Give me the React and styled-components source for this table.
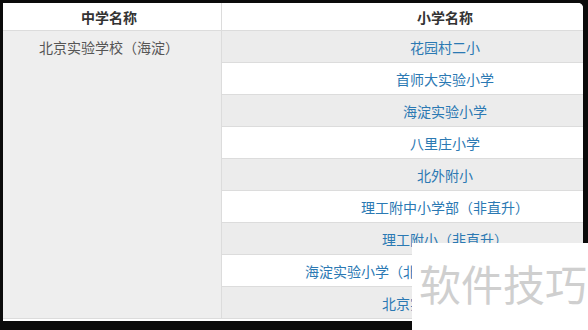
import React from "react";
import styled, { createGlobalStyle } from "styled-components";

const GlobalStyle = createGlobalStyle`
  html, body {
    margin: 0;
    padding: 0;
    background: #0b0b0b;
  }
  body {
    font-family: "Noto Sans CJK SC", "Liberation Sans", sans-serif;
  }
`;

const schools = [
  "花园村二小",
  "首师大实验小学",
  "海淀实验小学",
  "八里庄小学",
  "北外附小",
  "理工附中小学部（非直升）",
  "理工附小（非直升）",
  "海淀实验小学（北京实验学校小学部非直升）",
  "北京实验学校小学部",
];

function App() {
  return (
    <>
      <GlobalStyle />
      <Frame>
        <Card>
          <Table>
            <HeaderRow>
              <HeadCell $left>中学名称</HeadCell>
              <HeadCell>小学名称</HeadCell>
            </HeaderRow>
            <Body>
              <MiddleCell>北京实验学校（海淀）</MiddleCell>
              <PrimaryList>
                {schools.map((name, i) => (
                  <PrimaryRow key={name} $shaded={i % 2 === 0}>
                    <SchoolLink>{name}</SchoolLink>
                  </PrimaryRow>
                ))}
              </PrimaryList>
            </Body>
          </Table>
        </Card>
        <Watermark>软件技巧</Watermark>
      </Frame>
    </>
  );
}

export const Frame = styled.div`
  position: relative;
  width: 588px;
  height: 330px;
  padding: 3px 0 0 3px;
  box-sizing: border-box;
  background: #0b0b0b;
  overflow: hidden;
`;

export const Card = styled.div`
  width: 580px;
  height: 318px;
  background: #fff;
  border-top-right-radius: 5px;
  overflow: hidden;
`;

export const Table = styled.div`
  width: 665px;
  font-size: 14px;
`;

export const HeaderRow = styled.div`
  display: flex;
  height: 27px;
  border-bottom: 1px solid #dcdcdc;
  background: #fff;
`;

export const HeadCell = styled.div`
  flex: ${(p) => (p.$left ? "0 0 212px" : "1")};
  padding-right: ${(p) => (p.$left ? "6px" : "0")};
  border-right: ${(p) => (p.$left ? "1px solid #dcdcdc" : "none")};
  display: flex;
  align-items: center;
  justify-content: center;
  font-weight: bold;
  color: #333;
`;

export const Body = styled.div`
  display: flex;
  border-bottom: 1px solid #dcdcdc;
`;

export const MiddleCell = styled.div`
  flex: 0 0 212px;
  padding-right: 6px;
  border-right: 1px solid #dcdcdc;
  background: #eeeeee;
  color: #555;
  text-align: center;
  line-height: 32px;
`;

export const PrimaryList = styled.div`
  flex: 1;
  display: flex;
  flex-direction: column;
`;

export const PrimaryRow = styled.div`
  height: 31px;
  display: flex;
  align-items: center;
  justify-content: center;
  white-space: nowrap;
  background: ${(p) => (p.$shaded ? "#ececec" : "#fff")};
  & + & {
    border-top: 1px solid #dcdcdc;
  }
`;

export const SchoolLink = styled.a`
  color: #2b79b3;
  text-decoration: none;
  cursor: pointer;
`;

export const Watermark = styled.div`
  position: absolute;
  left: 412px;
  top: 243px;
  right: 0;
  bottom: 0;
  background: #fff;
  padding: 19px 0 0 7px;
  font-size: 42px;
  line-height: 42px;
  color: #cfcfcf;
  white-space: nowrap;
`;

export default App;
